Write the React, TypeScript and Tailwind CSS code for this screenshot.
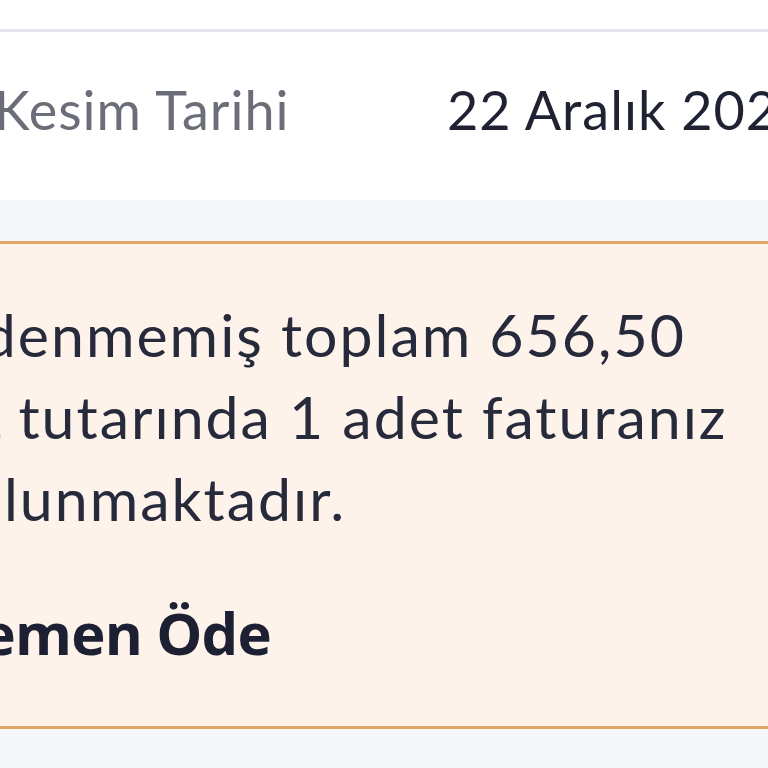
export default function App() {
  return (
    <div className="w-[768px] h-[768px] overflow-hidden bg-white font-['Lato',sans-serif]">
      <div className="h-[29px] bg-white" />
      <div className="h-[3px] bg-[#e4e5ea]" />

      <div className="h-[168px] bg-white flex items-center overflow-hidden">
        <div className="flex items-center -ml-[6px] pb-[14px]">
          <span className="w-[453px] shrink-0 text-[54px] tracking-[1px] text-[#6b6e79] whitespace-nowrap">Kesim Tarihi</span>
          <span className="text-[54px] tracking-[1px] text-[#1f2233] whitespace-nowrap">22 Aralık 2024</span>
        </div>
      </div>

      <div className="h-[41px] bg-[#f6f7f9]" />

      <div className="h-[488px] bg-[#fdf3eb] border-y-[3px] border-[#e0a465] overflow-hidden">
        <div className="-ml-[66px] pt-[50px] text-[59px] leading-[82px] tracking-[2px] text-[#262a3b] whitespace-nowrap">
          <p>Ödenmemiş toplam 656,50</p>
          <p>TL tutarında 1 adet faturanız</p>
          <p>bulunmaktadır.</p>
        </div>
        <div className="-ml-[62px] mt-[53px] font-['Open_Sans',sans-serif] font-bold text-[58px] leading-[80px] tracking-[-0.8px] text-[#1d2033] whitespace-nowrap">
          Hemen Öde
        </div>
      </div>

      <div className="h-[39px] bg-[#f6f7f9]" />
    </div>
  )
}
